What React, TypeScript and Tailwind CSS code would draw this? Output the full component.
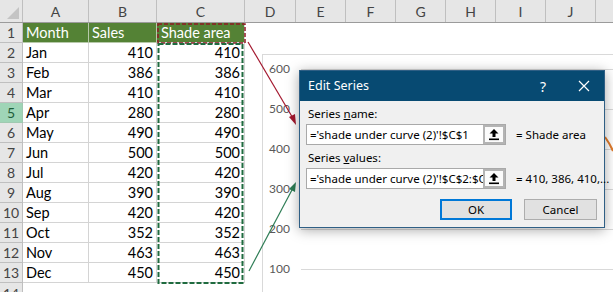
const COLS = [
  { label: "A", w: "w-[66px]" },
  { label: "B", w: "w-[68px]" },
  { label: "C", w: "w-[88px]" },
  { label: "D", w: "w-[51px]" },
  { label: "E", w: "w-[50px]" },
  { label: "F", w: "w-[50px]" },
  { label: "G", w: "w-[50px]" },
  { label: "H", w: "w-[50px]" },
  { label: "I", w: "w-[50px]" },
  { label: "J", w: "w-[50px]" },
]

const DATA: [string, number][] = [
  ["Jan", 410],
  ["Feb", 386],
  ["Mar", 410],
  ["Apr", 280],
  ["May", 490],
  ["Jun", 500],
  ["Jul", 420],
  ["Aug", 390],
  ["Sep", 420],
  ["Oct", 352],
  ["Nov", 463],
  ["Dec", 450],
]

const AXIS = ["600", "500", "400", "300", "200", "100"]

function UploadIcon() {
  return (
    <svg width="12" height="13" viewBox="0 0 12 13">
      <path d="M6 1 L1.5 5.5 H4.5 V9 H7.5 V5.5 H10.5 Z" fill="#000" />
      <rect x="1" y="10.5" width="10" height="1.6" fill="#000" />
    </svg>
  )
}

function RefInput({ value }: { value: string }) {
  return (
    <div className="flex h-[21px] w-[200px] border border-[#a9a9a9]">
      <div className="flex-1 overflow-hidden whitespace-nowrap bg-white pl-[3px] leading-[19px] text-black">{value}</div>
      <div className="flex w-[22px] items-center justify-center border-[2px] border-[#b4b4b4] bg-[#fbfbfb]">
        <UploadIcon />
      </div>
    </div>
  )
}

function EditSeries() {
  return (
    <div className="absolute left-[299px] top-[70px] flex h-[158px] w-[306px] flex-col border border-[#2f5f85] bg-[#f0f0f0] shadow-[0_2px_12px_rgba(0,0,0,0.35)] font-['Noto_Sans',sans-serif] text-[11.5px] text-black">
      <div className="flex h-[30px] items-center bg-[#074a72] pl-[8px] pr-[14px] text-[12.5px] text-white">
        <span className="flex-1">Edit Series</span>
        <span className="mr-[32px] text-[14px]">?</span>
        <svg width="12" height="12" viewBox="0 0 12 12">
          <path d="M1 1 L11 11 M11 1 L1 11" stroke="#fff" strokeWidth="1.2" />
        </svg>
      </div>
      <div className="flex flex-col px-[6px] pt-[5px]">
        <div className="pl-[2px] leading-[16px]">
          Series <span className="underline">n</span>ame:
        </div>
        <div className="mt-[2px] flex items-center">
          <RefInput value="='shade under curve (2)'!$C$1" />
          <span className="ml-[10px] whitespace-nowrap">= Shade area</span>
        </div>
        <div className="mt-[5px] pl-[2px] leading-[16px]">
          Series <span className="underline">v</span>alues:
        </div>
        <div className="mt-[2px] flex items-center">
          <RefInput value="='shade under curve (2)'!$C$2:$C$13" />
          <span className="ml-[10px] whitespace-nowrap">= 410, 386, 410,...</span>
        </div>
        <div className="mt-[10px] flex justify-end gap-[12px] pr-[1px]">
          <div className="flex h-[21px] w-[72px] items-center justify-center border-2 border-[#0078d7] bg-[#e1e1e1]">OK</div>
          <div className="flex h-[21px] w-[73px] items-center justify-center border border-[#adadad] bg-[#e1e1e1]">Cancel</div>
        </div>
      </div>
    </div>
  )
}

function Chart() {
  return (
    <div className="absolute bottom-0 left-[262px] right-0 top-[54px] border-l border-t border-[#d9d9d9] bg-white pt-[14px] font-['Lato',sans-serif] text-[12px] text-[#595959]">
      {AXIS.map((v) => (
        <div key={v} className="flex h-[40px] items-start">
          <span className="-mt-[8px] w-[27px] text-right leading-[16px]">{v}</span>
          <div className="ml-[11px] h-px flex-1 bg-[#d9d9d9]" />
        </div>
      ))}
    </div>
  )
}

export default function App() {
  return (
    <div className="relative h-[292px] w-[613px] overflow-hidden bg-white font-['Lato',sans-serif] text-[14.5px] text-black">
      {/* column headers */}
      <div className="flex h-[23px] border-b border-[#9b9b9b] bg-[#e6e6e6] text-[14px] text-[#444]">
        <div className="relative w-[23px] border-r border-[#bfbfbf]">
          <svg className="absolute bottom-[3px] right-[3px]" width="12" height="12" viewBox="0 0 12 12">
            <path d="M12 0 L12 12 L0 12 Z" fill="#c4c4c4" />
          </svg>
        </div>
        {COLS.map((c) => (
          <div key={c.label} className={`${c.w} flex items-center justify-center border-r border-[#bfbfbf]`}>
            {c.label}
          </div>
        ))}
        <div className="flex-1" />
      </div>

      {/* row 1 */}
      <div className="flex h-[20px]">
        <div className="flex w-[23px] items-center justify-center border-b border-r border-[#bfbfbf] bg-[#e6e6e6] text-[14px] text-[#444]">1</div>
        <div className="flex w-[66px] items-end border-b border-r border-[#b7c9aa] bg-[#548235] pb-[1px] pl-[3px] leading-[17px] text-white">Month</div>
        <div className="flex w-[68px] items-end border-b border-r border-[#b7c9aa] bg-[#548235] pb-[1px] pl-[3px] leading-[17px] text-white">Sales</div>
        <div className="flex w-[88px] items-end border-b border-r border-[#d4d4d4] bg-[#548235] pb-[1px] pl-[4px] leading-[17px] text-white">Shade area</div>
        <div className="flex-1" />
      </div>

      {DATA.map(([m, v], i) => (
        <div key={m} className="flex h-[20px]">
          <div
            className={`flex w-[23px] items-center justify-center border-b border-r text-[14px] ${
              i === 3 ? "border-[#9fc9b0] bg-[#9fd5b7] text-[#1e5e3a]" : "border-[#bfbfbf] bg-[#e6e6e6] text-[#444]"
            }`}
          >
            {i + 2}
          </div>
          <div className="flex w-[66px] items-end border-b border-r border-[#d4d4d4] pb-[1px] pl-[3px] leading-[17px]">{m}</div>
          <div className="flex w-[68px] items-end justify-end border-b border-r border-[#d4d4d4] pb-[1px] pr-[3px] leading-[17px]">{v}</div>
          <div className="flex w-[88px] items-end justify-end border-b border-r border-[#d4d4d4] pb-[1px] pr-[4px] leading-[17px]">{v}</div>
          <div className="flex-1" />
        </div>
      ))}

      <div className="flex h-[20px]">
        <div className="flex w-[23px] items-center justify-center border-r border-[#bfbfbf] bg-[#e6e6e6] text-[14px] text-[#444]">14</div>
        <div className="flex-1" />
      </div>

      {/* copy marquees */}
      <svg className="pointer-events-none absolute left-0 top-0" width="613" height="292">
        <rect x="158" y="24" width="87" height="19" fill="none" stroke="#8e1b25" strokeWidth="1.5" strokeDasharray="4 2" />
        <rect x="158.5" y="44" width="84" height="239" fill="none" stroke="#1f6b3f" strokeWidth="2" strokeDasharray="5 2" />
      </svg>

      <Chart />

      <svg className="pointer-events-none absolute left-0 top-0" width="613" height="292">
        <path d="M605 137 Q610 144 613 151" stroke="#e07b2c" strokeWidth="2" fill="none" />
        <line x1="248" y1="42" x2="294" y2="120" stroke="#a3172e" strokeWidth="1.2" />
        <path d="M296 125 L289 117 L295 114 Z" fill="#a3172e" />
        <line x1="249" y1="271" x2="293" y2="188" stroke="#2e7d55" strokeWidth="1.2" />
        <path d="M296 182 L295 192 L289 189 Z" fill="#2e7d55" />
      </svg>

      <EditSeries />
    </div>
  )
}
